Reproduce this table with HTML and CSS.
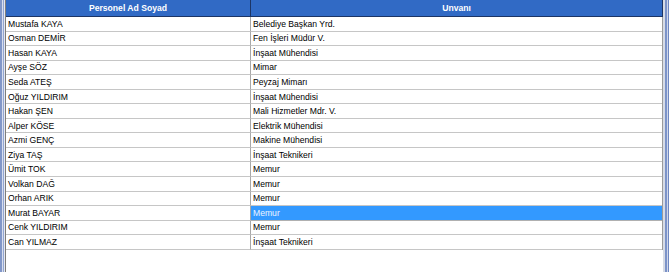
FILE: index.html
```html
<!DOCTYPE html>
<html lang="tr">
<head>
<meta charset="utf-8">
<title>Personel</title>
<link rel="stylesheet" href="styles.css">
</head>
<body>
<div class="window">
  <div class="frame-left"><span class="fl-a"></span><span class="fl-b"></span><span class="fl-c"></span><span class="fl-d"></span></div>
  <div class="panel">
    <div class="grid">
      <div class="hd c1">Personel Ad Soyad</div>
      <div class="hd c2">Unvanı</div>
      <div class="cell c1">Mustafa KAYA</div><div class="cell c2">Belediye Başkan Yrd.</div>
      <div class="cell c1">Osman DEMİR</div><div class="cell c2">Fen İşleri Müdür V.</div>
      <div class="cell c1">Hasan KAYA</div><div class="cell c2">İnşaat Mühendisi</div>
      <div class="cell c1">Ayşe SÖZ</div><div class="cell c2">Mimar</div>
      <div class="cell c1">Seda ATEŞ</div><div class="cell c2">Peyzaj Mimarı</div>
      <div class="cell c1">Oğuz YILDIRIM</div><div class="cell c2">İnşaat Mühendisi</div>
      <div class="cell c1">Hakan ŞEN</div><div class="cell c2">Mali Hizmetler Mdr. V.</div>
      <div class="cell c1">Alper KÖSE</div><div class="cell c2">Elektrik Mühendisi</div>
      <div class="cell c1">Azmi GENÇ</div><div class="cell c2">Makine Mühendisi</div>
      <div class="cell c1">Ziya TAŞ</div><div class="cell c2">İnşaat Teknikeri</div>
      <div class="cell c1">Ümit TOK</div><div class="cell c2">Memur</div>
      <div class="cell c1">Volkan DAĞ</div><div class="cell c2">Memur</div>
      <div class="cell c1">Orhan ARIK</div><div class="cell c2">Memur</div>
      <div class="cell c1">Murat BAYAR</div><div class="cell c2 selected">Memur</div>
      <div class="cell c1">Cenk YILDIRIM</div><div class="cell c2">Memur</div>
      <div class="cell c1">Can YILMAZ</div><div class="cell c2">İnşaat Teknikeri</div>
    </div>
  </div>
  <div class="frame-right"><span class="fr-a"></span><span class="fr-b"></span><span class="fr-c"></span><span class="fr-d"></span></div>
</div>
</body>
</html>
```
FILE: styles.css
```css
html, body {
  margin: 0;
  padding: 0;
  background: #ffffff;
}
.window {
  display: flex;
  width: 669px;
  height: 272px;
  overflow: hidden;
  font-family: "Liberation Sans", Arial, sans-serif;
  font-size: 8.6px;
  color: #000;
}
.frame-left {
  display: flex;
  flex: 0 0 auto;
}
.fl-a { width: 2px; background: #8297c8; }
.fl-b { width: 1px; background: #d9dfee; }
.fl-c { width: 1px; background: #93a6d2; }
.fl-d { width: 1px; background: #e6e8ef; border-right: 1px solid #7d7d7d; }
.panel {
  flex: 1 1 auto;
  background: #ffffff;
  display: flex;
  flex-direction: column;
}
.grid {
  display: grid;
  grid-template-columns: 245px 411px;
  grid-template-rows: 17px repeat(16, 14.56px);
  border-right: 1px solid #9a9a9a;
  width: 656px;
}
.hd {
  background: #316ac5;
  color: #ffffff;
  font-weight: bold;
  text-align: center;
  line-height: 16px;
  border-bottom: 1px solid #1c3566;
}
.hd.c1 { border-right: 1px solid #1c3566; }
.hd.c2 { border-right: 1px solid #1c3566; margin-right: -1px; }
.cell {
  border-bottom: 1px solid #c6c6c6;
  padding-left: 2px;
  display: flex;
  align-items: center;
  white-space: nowrap;
  overflow: hidden;
}
.cell.c1 { border-right: 1px solid #a8a8a8; }
.cell.selected {
  background: #3399ff;
  color: #eaf4ff;
  border-bottom-color: #b0b0b0;
}
.frame-right {
  display: flex;
  flex: 0 0 auto;
}
.fr-a { width: 2px; background: #d6dbe6; }
.fr-b { width: 2px; background: #7c93c8; }
.fr-c { width: 1px; background: #cfd7ea; }
.fr-d { width: 2px; background: #6f87c2; }
```
